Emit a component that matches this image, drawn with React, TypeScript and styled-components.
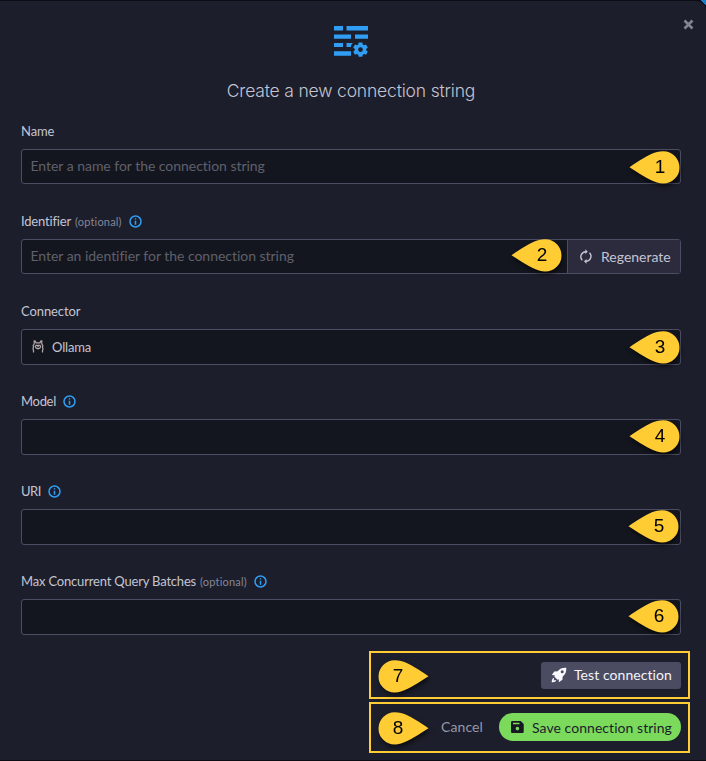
import React from 'react';
import styled, { createGlobalStyle, css } from 'styled-components';

const colors = {
  panel: '#1c1e2b',
  input: '#14161f',
  border: '#4c4d63',
  text: '#c4c4d2',
  muted: '#85869a',
  placeholder: '#5f606b',
  info: '#2f9ef4',
  marker: '#ffcc33',
  success: '#7bd95c',
};

const GlobalStyle = createGlobalStyle`
  *, *::before, *::after { box-sizing: border-box; }
  html, body { margin: 0; background: #0c0d14; }
  body {
    font-family: Lato, "Open Sans", sans-serif;
    font-size: 14px;
    font-variant-ligatures: none;
    color: ${colors.text};
    overflow: hidden;
  }
  button, input { font: inherit; color: inherit; margin: 0; }
  svg { display: block; flex: none; }
`;

const Backdrop = styled.div`
  height: 761px;
  padding: 1px 0;
  background: linear-gradient(225deg, #1682cc 0 4px, #0c0d14 4px);
`;

const Modal = styled.main`
  position: relative;
  display: flex;
  flex-direction: column;
  height: 759px;
  padding: 0 16px 0 21px;
  background: ${colors.panel};
  border-radius: 0 9px 0 0;
`;

const CloseButton = styled.button`
  position: absolute;
  top: 18px;
  right: 12px;
  padding: 0;
  border: 0;
  background: none;
`;

const Header = styled.header`
  display: flex;
  flex-direction: column;
  align-items: center;
  height: 120px;
  padding: 25px 9px 0 0;
`;

const Title = styled.h1`
  margin: 23px 0 0;
  font-family: Inter, sans-serif;
  font-size: 17.5px;
  font-weight: 300;
  line-height: 22px;
  letter-spacing: -0.18px;
`;

const Form = styled.form`
  display: flex;
  flex-direction: column;
  margin-right: 9px;
`;

const Field = styled.div`
  height: 90px;
`;

const Label = styled.label<{ $spacing?: number }>`
  display: flex;
  align-items: center;
  height: 28px;
  padding-bottom: 8px;
  font-size: 13px;
  letter-spacing: ${(p) => p.$spacing ?? -0.1}px;
`;

const Optional = styled.span`
  margin: 1px 0 0 4px;
  font-size: 11px;
  letter-spacing: 0.18px;
  color: ${colors.muted};
`;

const InfoIcon = styled.svg`
  margin: 1px 0 0 7px;
  color: ${colors.info};
`;

const Control = styled.div<{ $height: number }>`
  position: relative;
  display: flex;
  height: ${(p) => p.$height}px;
  background: ${colors.input};
  border: 1px solid ${colors.border};
  border-radius: 3px;
`;

const Input = styled.input`
  flex: 1;
  min-width: 0;
  padding: 0 8.5px 2px;
  border: 0;
  outline: 0;
  background: none;
  letter-spacing: -0.03px;
  &::placeholder { color: ${colors.placeholder}; opacity: 1; }
`;

const SelectValue = styled.div`
  display: flex;
  align-items: center;
  gap: 8px;
  padding: 0 0 1px 10px;
  font-size: 13px;
  letter-spacing: -0.15px;
`;

const RegenerateButton = styled.button`
  display: flex;
  align-items: center;
  gap: 8px;
  width: 113px;
  padding: 0 0 1px 11px;
  border: 0;
  border-left: 1px solid ${colors.border};
  background: #2b2b3d;
  white-space: nowrap;
`;

const PinBox = styled.div<{ $left: number; $top: number }>`
  position: absolute;
  left: ${(p) => p.$left}px;
  top: ${(p) => p.$top}px;
  width: 51px;
  height: 33px;
  filter: drop-shadow(1px 3px 2px rgba(0, 0, 0, 0.55));
`;

const PinShape = styled.svg<{ $flip?: boolean }>`
  ${(p) => p.$flip && css`transform: scaleX(-1);`}
`;

const PinNumber = styled.span<{ $flip?: boolean }>`
  position: absolute;
  top: 0;
  left: ${(p) => (p.$flip ? 10 : 21)}px;
  width: 20px;
  line-height: 32px;
  text-align: center;
  font-family: "Liberation Sans", Arial, sans-serif;
  font-size: 19px;
  color: #000;
`;

const Footer = styled.footer`
  display: flex;
  flex-direction: column;
  align-items: flex-end;
  gap: 3px;
  margin-top: -10px;
`;

const ActionFrame = styled.div<{ $height: number }>`
  position: relative;
  display: flex;
  align-items: center;
  justify-content: flex-end;
  width: 321px;
  height: ${(p) => p.$height}px;
  padding-right: 7px;
  border: 2px solid ${colors.marker};
`;

const TestButton = styled.button`
  display: flex;
  align-items: center;
  gap: 7px;
  width: 140px;
  height: 27px;
  padding: 0 0 1px 10px;
  border: 0;
  border-radius: 3px;
  background: #4b4b61;
  color: #f4f4fa;
  letter-spacing: 0.06px;
  white-space: nowrap;
`;

const CancelButton = styled.button`
  padding: 0 16px 2px 0;
  border: 0;
  background: none;
  color: #9697a8;
  letter-spacing: 0.1px;
`;

const SaveButton = styled.button`
  display: flex;
  align-items: center;
  gap: 8px;
  width: 182px;
  height: 28px;
  margin-bottom: 1px;
  padding: 0 0 0 12px;
  border: 0;
  border-radius: 14px;
  background: ${colors.success};
  color: #1c1e2b;
  letter-spacing: 0.05px;
  white-space: nowrap;
`;

function Info() {
  return (
    <InfoIcon width="13" height="13" viewBox="0 0 13 13" fill="none" stroke="currentColor" strokeWidth="1.5">
      <circle cx="6.5" cy="6.5" r="5.5" />
      <path d="M6.5 5.7v4M6.5 3.2v1.4" />
    </InfoIcon>
  );
}

function Pin({ n, left, top, flip }: { n: number; left: number; top: number; flip?: boolean }) {
  return (
    <PinBox $left={left} $top={top}>
      <PinShape $flip={flip} width="51" height="33" viewBox="0 0 51 33">
        <path
          d="M0.5 16.3C10 10 19 3.500 28 1.100C30 .5 32 .2 34.300 .2A16.200 16.200 0 0 1 34.300 32.600C32 32.600 30 32.200 28 31.500C19 28.500 10 22.500 .5 16.300Z"
          fill={colors.marker}
        />
      </PinShape>
      <PinNumber $flip={flip}>{n}</PinNumber>
    </PinBox>
  );
}

function ConnectionIcon() {
  return (
    <svg width="36" height="31" viewBox="0 0 36 31" fill={colors.info}>
      <path d="M1 0h9v4.500H1zM13.500 0H35v4.500H13.500zM1 8.500h17v4.300H1zM22 8.500h13v4.300H22zM1 17h9v4H1zM13.500 17h6.300l-1.800 2.200v1.800h-4.500zM1 25.300h17V29.700H1z" />
      <path
        fillRule="evenodd"
        transform="translate(0 -.6)"
        d="M25.700 17h3.600l.5 2.200 1.100.6 2.100-.7 1.800 3-1.600 1.500v1.300l1.600 1.500-1.800 3-2.100-.7-1.100.6-.5 2h-3.600l-.5-2-1.100-.6-2.100.7-1.800-3 1.600-1.500v-1.300l-1.600-1.500 1.800-3 2.100.7 1.100-.6zM27.500 21.800a2.400 2.400 0 1 0 0 4.800a2.400 2.400 0 0 0 0-4.800z"
      />
    </svg>
  );
}

function LlamaIcon() {
  return (
    <svg width="12" height="13" viewBox="0 0 12 13" fill="none" stroke="#b3a9aa" strokeWidth="1.2">
      <path d="M1.500 12.500V10.500L1 9l.5-2-.4-1.500L2.200 4V1l1 .1.8 1.700h4L8.800 1.100l1-.1v3l1.100 1.500-.4 1.500.5 2-.5 1.500v2" />
      <path d="M3.300 6.300l.8-1h3.800l.8 1-.8 1.700L6 8.800 4.100 8zM5.300 6.700h1.400" />
    </svg>
  );
}

function RefreshIcon() {
  return (
    <svg width="14" height="15" viewBox="0 0 14 15" fill="none" stroke="currentColor" strokeWidth="1.4">
      <path d="M3.300 11.200A5 5 0 0 1 6.800 2.700M10.500 3.800A5 5 0 0 1 7 12.300" />
      <path d="M6.300 .3l2.500 2.400-2.500 2.400zM7.500 9.900L5 12.300l2.500 2.400z" fill="currentColor" stroke="none" />
    </svg>
  );
}

function RocketIcon() {
  return (
    <svg width="16" height="16" viewBox="0 0 16 16" fill="#f8f8fd">
      <path
        fillRule="evenodd"
        d="M15.300 .7C11.500 .5 8.800 1.500 6.600 4.300L3.300 4.600 .8 8.100l3 .2-.5 1.300 3.100 3.100 1.300-.5.2 3 3.500-2.500.3-3.300C14.500 7.200 15.500 4.500 15.300 .7zM11.200 3.300a1.500 1.500 0 1 0 0 3a1.500 1.500 0 0 0 0-3z"
      />
      <path d="M2.600 10.700c-1.400.7-1.800 2.500-1.900 4.600 2.100-.1 3.900-.5 4.600-1.900l-1.100-.5-1.700.6.6-1.700z" />
    </svg>
  );
}

function SaveIcon() {
  return (
    <svg width="13" height="12" viewBox="0 0 13 12">
      <path
        fill="#161822"
        fillRule="evenodd"
        d="M1.300 0h8.400L12.700 3v7.700c0 .7-.5 1.300-1.300 1.300H1.300C.6 12 0 11.400 0 10.700V1.300C0 .6.6 0 1.300 0zM2 1.800v1.500h6.500V1.800zM6.400 5.800a1.800 1.800 0 1 0 0 3.600a1.800 1.800 0 0 0 0-3.600z"
      />
    </svg>
  );
}

export default function App() {
  return (
    <>
      <GlobalStyle />
      <Backdrop>
        <Modal>
          <CloseButton type="button" aria-label="Close">
            <svg width="11" height="11" viewBox="0 0 11 11" fill="none" stroke="#838391" strokeWidth="2.600">
              <path d="M1.500 1.500l8 8M9.500 1.500l-8 8" />
            </svg>
          </CloseButton>
          <Header>
            <ConnectionIcon />
            <Title>Create a new connection string</Title>
          </Header>
          <Form>
            <Field>
              <Label>Name</Label>
              <Control $height={35}>
                <Input placeholder="Enter a name for the connection string" />
                <Pin n={1} left={607} top={1} />
              </Control>
            </Field>
            <Field>
              <Label $spacing={-0.18}>
                Identifier<Optional>(optional)</Optional>
                <Info />
              </Label>
              <Control $height={35}>
                <Input placeholder="Enter an identifier for the connection string" />
                <RegenerateButton type="button">
                  <RefreshIcon />
                  Regenerate
                </RegenerateButton>
                <Pin n={2} left={489} top={-1} />
              </Control>
            </Field>
            <Field>
              <Label>Connector</Label>
              <Control $height={36}>
                <SelectValue>
                  <LlamaIcon />
                  Ollama
                </SelectValue>
                <Pin n={3} left={607} top={1} />
              </Control>
            </Field>
            <Field>
              <Label $spacing={-0.3}>
                Model
                <Info />
              </Label>
              <Control $height={36}>
                <Input />
                <Pin n={4} left={607} top={0} />
              </Control>
            </Field>
            <Field>
              <Label $spacing={-0.5}>
                URI
                <Info />
              </Label>
              <Control $height={36}>
                <Input />
                <Pin n={5} left={606} top={0} />
              </Control>
            </Field>
            <Field>
              <Label $spacing={-0.18}>
                Max Concurrent Query Batches<Optional>(optional)</Optional>
                <Info />
              </Label>
              <Control $height={36}>
                <Input />
                <Pin n={6} left={606} top={0} />
              </Control>
            </Field>
          </Form>
          <Footer>
            <ActionFrame $height={48}>
              <Pin n={7} left={7} top={7} flip />
              <TestButton type="button">
                <RocketIcon />
                Test connection
              </TestButton>
            </ActionFrame>
            <ActionFrame $height={51}>
              <Pin n={8} left={7} top={8} flip />
              <CancelButton type="button">Cancel</CancelButton>
              <SaveButton type="button">
                <SaveIcon />
                Save connection string
              </SaveButton>
            </ActionFrame>
          </Footer>
        </Modal>
      </Backdrop>
    </>
  );
}
